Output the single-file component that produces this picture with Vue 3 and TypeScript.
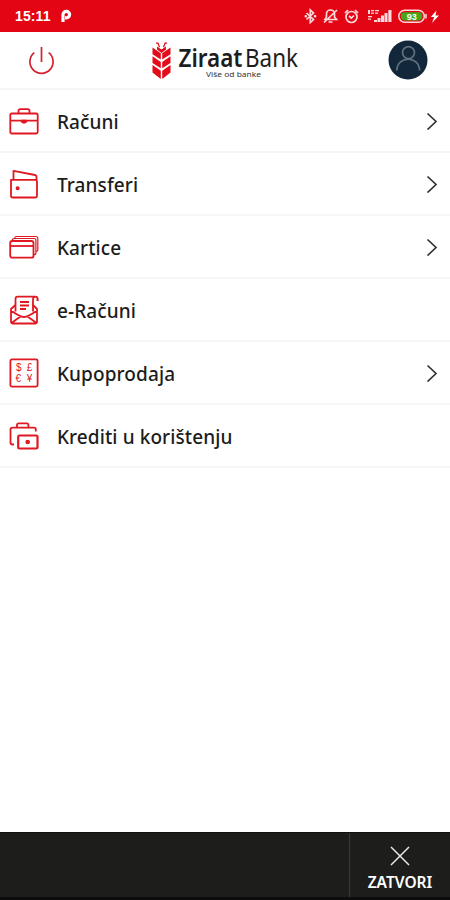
<script setup lang="ts">
type IconName = 'briefcase' | 'wallet' | 'cards' | 'envelope' | 'currency' | 'loan'

interface MenuItem {
  label: string
  icon: IconName
  arrow: boolean
}

const items: MenuItem[] = [
  { label: 'Računi', icon: 'briefcase', arrow: true },
  { label: 'Transferi', icon: 'wallet', arrow: true },
  { label: 'Kartice', icon: 'cards', arrow: true },
  { label: 'e-Računi', icon: 'envelope', arrow: false },
  { label: 'Kupoprodaja', icon: 'currency', arrow: true },
  { label: 'Krediti u korištenju', icon: 'loan', arrow: false },
]
</script>

<template>
  <div class="screen">
    <div class="status">
      <span class="clock">15:11</span>
      <svg class="parking" width="12" height="14" viewBox="0 0 12 14">
        <path d="M3 13V5.600a3.300 3.300 0 1 1 3.300 3.300H5" fill="none" stroke="#fff" stroke-width="3.200" />
      </svg>
      <svg class="indicators" width="145" height="20" viewBox="300 6 145 20">
        <g fill="none" stroke="#ffd9dc" stroke-width="1.700">
          <path d="M306.500 13l7 6.500-3.200 3V10l3.200 3-7 6.500" />
          <path d="M305.800 16.200h.1M315 16.200h.1" stroke-width="2.600" stroke-linecap="round" />
          <path d="M325 19.500h11.500l-2-2.500v-3a4 4 0 0 0-8 0v3zM328.500 22h4M324 22.500L337 10" />
          <circle cx="351.500" cy="17" r="5.500" />
          <path d="M349 16l2.300 2 2.700-2.500M345 13l3-2.800M358 13l-3-2.800" />
        </g>
        <g fill="#ffd9dc">
          <path d="M368 10h2v4h-2zM371 10h3v1.200h-3zM371 12.600h3v1.200h-3zM375 10h4v1.200h-4zM375 12.600h3v1.200h-3zM368 16h4v1.300h-4zM368 18.500h3v1.300h-3z" />
          <path d="M374 20h3v2H374zM377.500 18h3v4h-3zM381 15.500h3V22H381zM384.500 13h3v9h-3zM388.300 10h3.200v12h-3.200z" />
          <path d="M436.500 10.500l-5.700 6.500h3.400l-2.200 6 7-7.500h-3.500z" fill="#fff" />
        </g>
        <rect x="398.800" y="10.300" width="25.500" height="12" rx="6" fill="none" stroke="#ffd9dc" stroke-width="1.500" />
        <path d="M426 14v4.500" stroke="#ffd9dc" stroke-width="1.500" />
        <rect x="400.800" y="12.200" width="21.500" height="8.200" rx="4.100" fill="#46a817" />
        <text x="411.800" y="19.600" class="battery" text-anchor="middle">93</text>
      </svg>
    </div>

    <header class="header">
      <svg class="power" width="28" height="30" viewBox="0 0 28 30" fill="none" stroke="#d3222c" stroke-width="1.700">
        <path d="M7.300 7.700a11.600 11.600 0 1 0 14.400 0M14.500 2V17" />
      </svg>
      <svg class="logo" width="150" height="42" viewBox="150 40 150 42">
        <g fill="#e30d19">
          <path d="M152.500 47.500l8.300 5.800v6.300l-8.300-5.300zM152.500 56.200l8.300 5.800v6.300l-8.300-5.300zM152.500 64.900l8.300 5.800v8.300l-8.300-6.500z" />
          <path d="M170.500 47.500l-8.300 5.800v6.300l8.300-5.300zM170.500 56.200l-8.300 5.800v6.300l8.300-5.300zM170.500 64.900l-8.300 5.800v8.300l8.300-6.500z" />
          <path d="M157 46.500l4.500 3 4.500-3v3l-4.500 3.500-4.500-3.500z" />
        </g>
        <path d="M156 43.200h2l1.500 4M167 43.200h-2l-1.500 4" fill="none" stroke="#e30d19" stroke-width="1.200" />
        <text class="brand bold" x="178.500" y="67.200" textLength="64" lengthAdjust="spacingAndGlyphs">Ziraat</text>
        <text class="brand" x="245" y="67.200" textLength="53" lengthAdjust="spacingAndGlyphs">Bank</text>
        <text class="slogan" x="206" y="77" textLength="55" lengthAdjust="spacingAndGlyphs">Više od banke</text>
      </svg>
      <svg class="avatar" width="40" height="40" viewBox="0 0 40 40">
        <circle cx="20" cy="20" r="19.500" fill="#13273a" />
        <g fill="none" stroke="#5d7182" stroke-width="1.700">
          <circle cx="20.500" cy="12.600" r="6" />
          <path d="M8.800 30.500c0-15 22.800-15 22.800 0" />
        </g>
      </svg>
    </header>

    <nav>
      <div v-for="item in items" :key="item.label" class="row">
        <svg class="icon" width="30" height="30" viewBox="0 0 30 30" fill="none" stroke="#e01822" stroke-width="1.800" stroke-linejoin="round">
          <template v-if="item.icon === 'briefcase'">
            <rect x="1.300" y="7.500" width="27.400" height="20" rx="1.500" />
            <path d="M9.500 7.500V4.800q0-1.700 1.700-1.700h7.600q1.700 0 1.700 1.700v2.700M1.300 14.700h27.400" />
            <path d="M12.800 14.700h4.400v1.200q-2.200 1.800-4.400 0z" fill="#e01822" />
          </template>
          <template v-else-if="item.icon === 'wallet'">
            <path d="M2 10.800h24.500q1.500 0 1.500 1.500V27q0 1.500-1.500 1.500h-23Q2 28.500 2 27zM4.500 10.800V1.800L26 6q1.500.3 1.500 1.800v3.500" />
            <circle cx="8.600" cy="19.300" r="1.100" fill="#e01822" />
          </template>
          <template v-else-if="item.icon === 'cards'">
            <rect x="1.200" y="9" width="23.300" height="16.700" rx="2" />
            <path d="M1.200 14h23.300" />
            <path d="M3.300 8.500q0-2 2-2H25q1.900 0 1.900 2V21q0 1.700-2.200 1.700M5.800 6q0-1.500 1.700-1.500h19.200q2.100 0 2.100 2V18q0 1.500-1.700 1.500" stroke-width="1.200" />
          </template>
          <template v-else-if="item.icon === 'envelope'">
            <path d="M6.500 16.500V4q0-2.300 2.300-2.300h17.500q2.500 0 2.500 3.500h-1.300M24 16.500V5q0-3.300 2.300-3.300" />
            <path d="M6.500 10L2 14v13q0 1.500 1.500 1.500h23Q28 28.500 28 27V14l-4-4M2 15.500q9 6.500 13 6.500t13-6.500M2.500 28l9-6.500M27.500 28l-9-6.500" />
            <path d="M11 7h9M11 10.500h9M11 14h6" />
          </template>
          <template v-else-if="item.icon === 'currency'">
            <rect x="1.400" y="1.400" width="27.200" height="27.200" rx="1.500" />
            <g class="currency" fill="#e01822" stroke="none" text-anchor="middle">
              <text x="9.800" y="12.800">$</text>
              <text x="20.500" y="12.800">£</text>
              <text x="9.300" y="24">€</text>
              <text x="20.500" y="24">¥</text>
            </g>
          </template>
          <template v-else>
            <path d="M5 23.500H3.400q-1.900 0-1.900-1.900V8.500q0-1.900 1.900-1.900h21.500q1.900 0 1.900 1.900v2M8 6.500V4q0-1.600 1.600-1.600h8.200q1.600 0 1.600 1.600v2.500" />
            <rect x="9.200" y="14.500" width="19.300" height="13" rx="1.200" stroke-width="2.200" />
            <circle cx="18.700" cy="21" r="1.400" fill="#e01822" />
          </template>
        </svg>
        <span class="label">{{ item.label }}</span>
        <svg v-if="item.arrow" class="arrow" width="12" height="18" viewBox="0 0 12 18" fill="none" stroke="#333" stroke-width="1.700">
          <path d="M1.500 1.500l8.500 8-8.500 8" />
        </svg>
      </div>
    </nav>

    <footer class="footer">
      <div class="close">
        <svg width="20" height="20" viewBox="0 0 20 20" stroke="#e8e8e8" stroke-width="1.500">
          <path d="M1 1l18 18M19 1L1 19" />
        </svg>
        <span class="close-label">ZATVORI</span>
      </div>
    </footer>
  </div>
</template>

<style>
body {
  margin: 0;
  background: #fff;
}
</style>

<style scoped>
.screen {
  display: flex;
  flex-direction: column;
  width: 450px;
  height: 900px;
  overflow: hidden;
  background: #fff;
  font-family: "Noto Sans", sans-serif;
}
.status {
  display: flex;
  align-items: center;
  box-sizing: border-box;
  height: 32px;
  padding: 0 5px 0 15px;
  background: #e30414;
}
.clock {
  width: 45px;
  color: #fff;
  font: 700 14px/34px "Liberation Sans", sans-serif;
  letter-spacing: 0.1px;
}
.indicators {
  margin-left: auto;
}
.battery {
  fill: #fff;
  font: 700 9px "Liberation Sans", sans-serif;
}
.header {
  display: flex;
  align-items: center;
  box-sizing: border-box;
  height: 58px;
  padding: 0 22px 0 27px;
  border-bottom: 2px solid #f5f5f5;
}
.logo {
  margin: 2px 0 0 95px;
  overflow: visible;
}
.avatar {
  margin-left: auto;
}
.brand {
  fill: #1d1d1d;
  font: 400 25.500px "Noto Sans", sans-serif;
}
.bold {
  font-weight: 600;
}
.slogan {
  fill: #333;
  font: 400 7px "Noto Sans", sans-serif;
}
.row {
  display: flex;
  align-items: center;
  box-sizing: border-box;
  height: 63px;
  padding: 0 12px 0 9px;
  border-bottom: 2px solid #f6f6f6;
}
.label {
  margin: 2px 0 0 18px;
  color: #1c1c1c;
  font-size: 19px;
  font-weight: 500;
  letter-spacing: 0.1px;
  line-height: 28px;
}
.arrow {
  margin-left: auto;
}
.currency {
  font: 400 10px "Liberation Sans", sans-serif;
}
.footer {
  display: flex;
  justify-content: flex-end;
  box-sizing: border-box;
  height: 68px;
  margin-top: auto;
  background: #1d1e1c;
  border-top: 1px solid #111;
  border-bottom: 3px solid #0c0c0c;
}
.close {
  display: flex;
  flex-direction: column;
  align-items: center;
  box-sizing: border-box;
  width: 101px;
  padding-top: 13px;
  border-left: 1px solid #3a3b39;
}
.close-label {
  margin-top: 5px;
  color: #fff;
  font-size: 15.500px;
  font-weight: 600;
  line-height: 22px;
}
</style>
